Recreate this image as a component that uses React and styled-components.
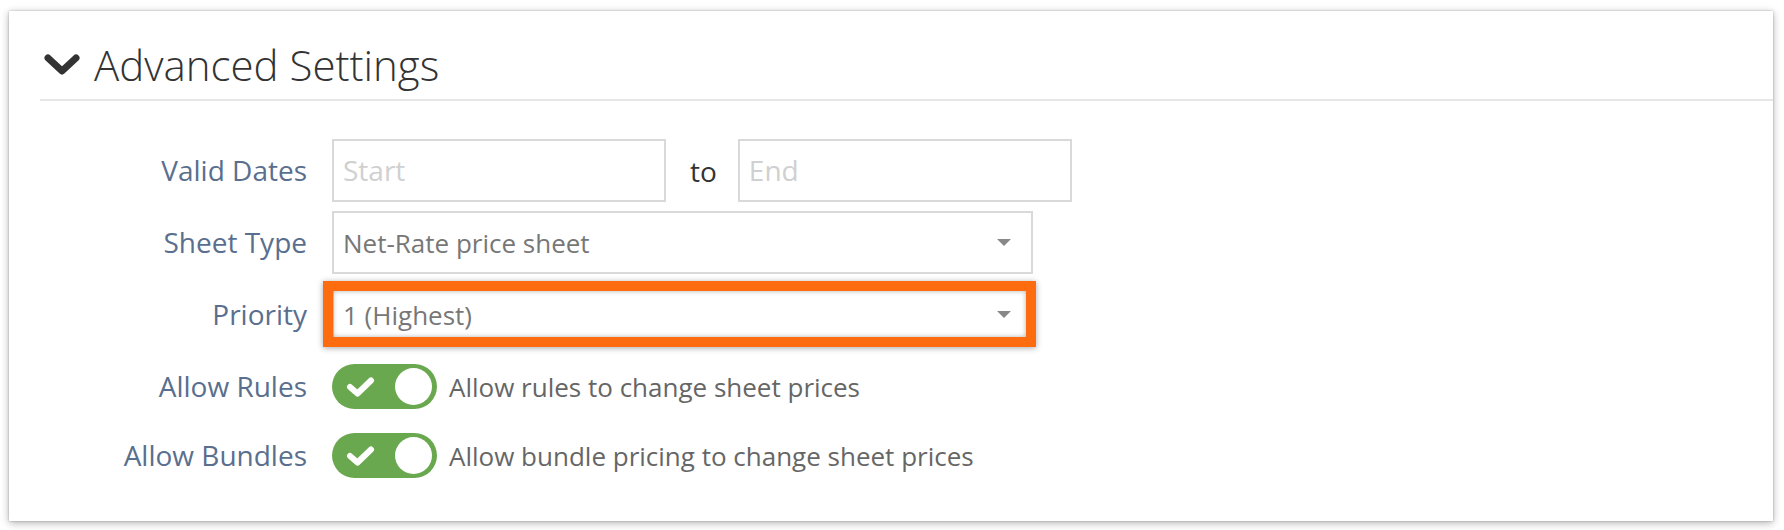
import styled, { createGlobalStyle } from "styled-components";

const GlobalStyle = createGlobalStyle`
  body {
    margin: 0;
    background: #ffffff;
    font-family: "Open Sans", "Noto Sans", sans-serif;
  }
`;

const Card = styled.div`
  margin: 11px 11px 10px 9px;
  background: #fff;
  box-shadow: rgba(0, 0, 0, 0.3) 0px 2px 8px 0px, rgba(0, 0, 0, 0.25) 0px 0px 2px 0px;
  padding-bottom: 37px;
`;

const Header = styled.div`
  margin-left: 31px;
  padding: 26px 0 7px 4px;
  border-bottom: 2px solid #e6e6e6;
  display: flex;
  align-items: center;
  gap: 14px;
  > h2 {
    margin: 0;
    font-size: 42px;
    font-weight: 300;
    line-height: 55px;
    color: #333;
  }
`;

const Form = styled.div`
  display: grid;
  grid-template-columns: 298px 1fr;
  column-gap: 25px;
  row-gap: 9px;
  padding-top: 38px;
`;

const Label = styled.div`
  text-align: right;
  font-size: 28px;
  color: #5a6f8e;
  height: ${(p) => p.$h || 63}px;
  line-height: ${(p) => p.$h || 63}px;
`;

const Field = styled.div`
  display: flex;
  align-items: center;
  height: ${(p) => p.$h || 63}px;
`;

const TextInput = styled.div`
  box-sizing: border-box;
  width: ${(p) => p.$width}px;
  height: 63px;
  border: 2px solid #d9d9d9;
  padding-left: 9px;
  font-size: 28px;
  line-height: 59px;
  color: #d0d0d0;
`;

const To = styled.span`
  font-size: 28px;
  color: #333;
  margin: 0 21px 0 24px;
`;

const SelectWrap = styled.div`
  position: relative;
  width: 701px;
`;

const Select = styled.div`
  box-sizing: border-box;
  height: 63px;
  border: 2px solid #d9d9d9;
  padding: 0 20px 0 9px;
  display: flex;
  align-items: center;
  justify-content: space-between;
  font-size: 26px;
  color: #777;
  &::after {
    content: "";
    border-left: 7px solid transparent;
    border-right: 7px solid transparent;
    border-top: 7px solid #888;
  }
`;

const Highlight = styled.div`
  position: absolute;
  top: -2px;
  left: -9px;
  right: -3px;
  bottom: -1px;
  border: 10px solid #fd6c0e;
  box-shadow: rgba(0, 0, 0, 0.35) 0px 1px 6px 0px, inset rgba(0, 0, 0, 0.3) 0px 0px 5px 0px;
  pointer-events: none;
`;

const Toggle = styled.div`
  box-sizing: border-box;
  width: 105px;
  height: 45px;
  border-radius: 23px;
  background: #6aa84f;
  padding: 4px 5px 4px 14px;
  display: flex;
  align-items: center;
  justify-content: space-between;
  > span {
    width: 37px;
    height: 37px;
    border-radius: 50%;
    background: #fff;
  }
`;

const ToggleText = styled.span`
  margin-left: 12px;
  font-size: 26px;
  color: #666;
`;

const Check = () => (
  <svg width="29" height="22" viewBox="0 0 29 22">
    <polyline
      points="4,11 11.5,17.5 25,4.5"
      fill="none"
      stroke="#fff"
      strokeWidth="6"
      strokeLinecap="round"
      strokeLinejoin="round"
    />
  </svg>
);

const Chevron = () => (
  <svg width="36" height="22" viewBox="0 0 36 22">
    <polyline
      points="4,4 18,17 32,4"
      fill="none"
      stroke="#333"
      strokeWidth="7"
      strokeLinecap="round"
      strokeLinejoin="round"
    />
  </svg>
);

const toggles = [
  { label: "Allow Rules", text: "Allow rules to change sheet prices", h: 63 },
  { label: "Allow Bundles", text: "Allow bundle pricing to change sheet prices", h: 57 },
];

const App = () => {
  return (
    <>
      <GlobalStyle />
      <Card>
        <Header>
          <Chevron />
          <h2>Advanced Settings</h2>
        </Header>
        <Form>
          <Label>Valid Dates</Label>
          <Field>
            <TextInput $width={334}>Start</TextInput>
            <To>to</To>
            <TextInput $width={334}>End</TextInput>
          </Field>

          <Label>Sheet Type</Label>
          <Field>
            <SelectWrap>
              <Select>Net-Rate price sheet</Select>
            </SelectWrap>
          </Field>

          <Label>Priority</Label>
          <Field>
            <SelectWrap>
              <Select>1 (Highest)</Select>
              <Highlight />
            </SelectWrap>
          </Field>

          {toggles.map((t) => [
            <Label key={t.label + "l"} $h={t.h}>{t.label}</Label>,
            <Field key={t.label + "f"} $h={t.h}>
              <Toggle>
                <Check />
                <span />
              </Toggle>
              <ToggleText>{t.text}</ToggleText>
            </Field>,
          ])}
        </Form>
      </Card>
    </>
  );
};

export default App;
